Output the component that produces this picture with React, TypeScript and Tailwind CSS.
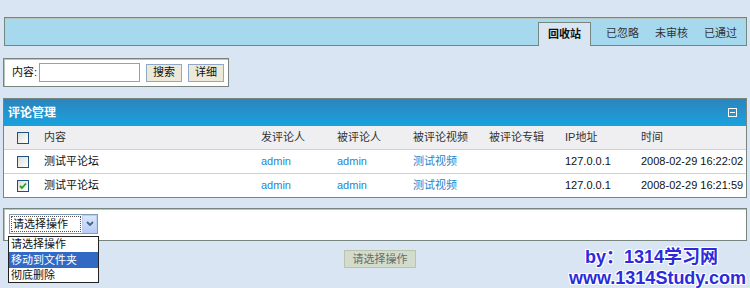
import React from "react";

function Checkbox({ checked = false }: { checked?: boolean }) {
  return (
    <div className="w-[12px] h-[12px] border border-[#1c5180] bg-gradient-to-br from-[#dcdcd7] to-[#ffffff] flex items-center justify-center">
      {checked && (
        <svg width="8" height="8" viewBox="0 0 8 8">
          <path d="M1 4 L3 6 L7 1.5" stroke="#21a121" strokeWidth="1.8" fill="none" />
        </svg>
      )}
    </div>
  );
}

const rows = [
  { time: "2008-02-29 16:22:02", checked: false },
  { time: "2008-02-29 16:21:59", checked: true },
];

export default function App() {
  return (
    <div className="relative w-[750px] h-[288px] overflow-hidden bg-[#dae5f3] font-['Liberation_Sans','Noto_Sans_CJK_SC',sans-serif] text-[11px] text-[#222]">
      <div className="px-[3px] pt-[17px]">
        {/* tab bar */}
        <div className="ml-[1px] h-[29px] border border-[#76867f] shadow-[inset_0_1px_0_#b9c6c0] bg-[#a6d8ee] flex items-end justify-end pr-[1px]">
          <div className="h-[24px] w-[53px] -mb-[1px] border border-b-0 border-[#76867f] bg-[#dae5f3] flex items-center justify-center font-bold text-[#111] leading-none">
            回收站
          </div>
          <div className="ml-[7px] flex">
            {["已忽略", "未审核", "已通过"].map((t) => (
              <div key={t} className="w-[49px] h-[24px] flex items-center justify-center text-[#333] leading-none">
                {t}
              </div>
            ))}
          </div>
        </div>

        {/* search box */}
        <div className="mt-[12px] w-[226px] h-[29px] border border-[#76867f] shadow-[inset_1px_1px_0_#b9c6c0] bg-white flex items-center pl-[8px]">
          <span className="leading-none text-[#111]">内容:</span>
          <div className="ml-[2px] w-[101px] h-[19px] border border-[#7fa5d6] bg-white" />
          <div className="ml-[6px] w-[36px] h-[18px] border border-[#8fa9c9] bg-[#ece9d8] flex items-center justify-center leading-none text-[#111]">
            搜索
          </div>
          <div className="ml-[6px] w-[36px] h-[18px] border border-[#8fa9c9] bg-[#ece9d8] flex items-center justify-center leading-none text-[#111]">
            详细
          </div>
        </div>

        {/* panel */}
        <div className="mt-[11px] border border-[#76867f] bg-white">
          <div className="h-[27px] bg-gradient-to-b from-[#2a84bd] to-[#16a2de] flex items-center justify-between pl-[4px] pr-[9px]">
            <span className="text-white font-bold text-[12px] leading-none">评论管理</span>
            <div className="w-[9px] h-[9px] border border-white flex items-center justify-center">
              <div className="w-[5px] h-[1px] bg-white" />
            </div>
          </div>
          <div className="grid grid-cols-[40px_217px_76px_76px_76px_76px_76px_1fr] h-[24px] items-center bg-[#efeff2] border-b border-[#bcd6ec] text-[#333]">
            <div className="pl-[13px]"><Checkbox /></div>
            <div>内容</div>
            <div>发评论人</div>
            <div>被评论人</div>
            <div>被评论视频</div>
            <div>被评论专辑</div>
            <div>IP地址</div>
            <div>时间</div>
          </div>
          {rows.map((r, i) => (
            <div
              key={i}
              className={`grid grid-cols-[40px_217px_76px_76px_76px_76px_76px_1fr] items-center ${i === 0 ? "h-[24px] border-b border-[#bcd6ec]" : "h-[23px]"}`}
            >
              <div className="pl-[13px]"><Checkbox checked={r.checked} /></div>
              <div className="text-[#111]">测试平论坛</div>
              <div className="text-[#1f86cc]">admin</div>
              <div className="text-[#1f86cc]">admin</div>
              <div className="text-[#1f86cc]">测试视频</div>
              <div></div>
              <div className="text-[#111]">127.0.0.1</div>
              <div className="text-[#111]">{r.time}</div>
            </div>
          ))}
        </div>

        {/* bottom operation panel */}
        <div className="mt-[10px] h-[33px] border border-[#76867f] shadow-[inset_1px_1px_0_#b9c6c0] bg-white pl-[5px] pt-[5px]">
          <div className="w-[89px] h-[20px] border border-[#7f9db9] bg-white flex items-center">
            <div className="ml-[1px] w-[71px] h-[16px] border border-dotted border-[#555] flex items-center pl-[1px] leading-none text-[#111]">
              请选择操作
            </div>
            <div className="ml-[1px] w-[15px] h-[18px] bg-gradient-to-b from-[#dbe6fc] to-[#b7cdf6] border border-[#b9cdf5] flex items-center justify-center">
              <svg width="8" height="6" viewBox="0 0 8 6">
                <path d="M1 1 L4 4 L7 1" stroke="#4d6185" strokeWidth="1.8" fill="none" />
              </svg>
            </div>
          </div>
        </div>

        {/* submit button */}
        <div className="mt-[9px] flex justify-center pl-[10px]">
          <div className="w-[72px] h-[18px] border border-[#b9c4ad] bg-[#d3dccb] flex items-center justify-center leading-none text-[#6a6a6a]">
            请选择操作
          </div>
        </div>
      </div>

      {/* dropdown list */}
      <div className="absolute left-[8px] top-[236px] w-[91px] h-[47px] border border-[#222] bg-white text-[#111] leading-none">
        <div className="h-[15px] flex items-center pl-[2px]">请选择操作</div>
        <div className="h-[16px] flex items-center pl-[2px] bg-[#316ac5] text-white">移动到文件夹</div>
        <div className="h-[15px] flex items-center pl-[2px]">彻底删除</div>
      </div>

      {/* watermark */}
      <div className="absolute left-[585px] top-[248px] text-[18px] leading-none font-bold text-[#2b2bdc] whitespace-nowrap [text-shadow:1px_1px_0_#fff,-1px_-1px_0_#fff,1px_-1px_0_#fff,-1px_1px_0_#fff,1px_0_0_#fff,-1px_0_0_#fff,0_1px_0_#fff,0_-1px_0_#fff]">
        by：1314学习网
      </div>
      <div className="absolute left-[569px] top-[269px] text-[18px] leading-none font-bold text-[#2b2bdc] whitespace-nowrap [text-shadow:1px_1px_0_#fff,-1px_-1px_0_#fff,1px_-1px_0_#fff,-1px_1px_0_#fff,1px_0_0_#fff,-1px_0_0_#fff,0_1px_0_#fff,0_-1px_0_#fff]">
        www.1314Study.com
      </div>
    </div>
  );
}
